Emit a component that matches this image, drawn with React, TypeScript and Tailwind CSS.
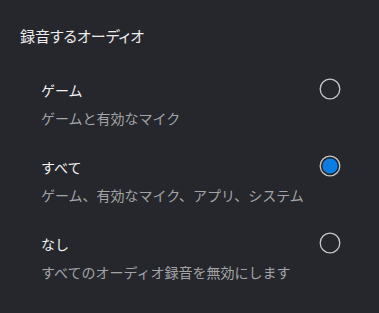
import React, { useState } from 'react';

const options = [
  { id: 'game', label: 'ゲーム', desc: 'ゲームと有効なマイク' },
  { id: 'all', label: 'すべて', desc: 'ゲーム、有効なマイク、アプリ、システム' },
  { id: 'none', label: 'なし', desc: 'すべてのオーディオ録音を無効にします' },
];

function Radio({ checked }: { checked: boolean }) {
  return (
    <svg width="22" height="22" viewBox="0 0 22 22">
      <circle cx="11" cy="11" r="9.8" fill="none" stroke="#c8c8c8" strokeWidth="1.3" />
      {checked && <circle cx="11" cy="11" r="7.6" fill="#0b7ee3" />}
    </svg>
  );
}

export default function App() {
  const [selected, setSelected] = useState('all');

  return (
    <div
      className="w-[379px] h-[313px] bg-[#25272c] overflow-hidden"
      style={{ fontFamily: '"Noto Sans CJK JP", "Noto Sans", sans-serif' }}
    >
      <div className="pl-[20px] pt-[25px] text-[15px] leading-[22px] text-[#ececec] [font-feature-settings:'palt']">
        録音するオーディオ
      </div>
      <div className="flex flex-col pt-[33px] pl-[41px] pr-[38px] gap-[29px]">
        {options.map((o) => (
          <div key={o.id} className="flex items-start justify-between cursor-pointer" onClick={() => setSelected(o.id)}>
            <div className="flex flex-col gap-[8px]">
              <div className="text-[14px] leading-[20px] text-[#f2f2f2]">{o.label}</div>
              <div className="text-[14px] leading-[20px] text-[#a3a4a6]">{o.desc}</div>
            </div>
            <div className="-mt-[2px]">
              <Radio checked={selected === o.id} />
            </div>
          </div>
        ))}
      </div>
    </div>
  );
}
